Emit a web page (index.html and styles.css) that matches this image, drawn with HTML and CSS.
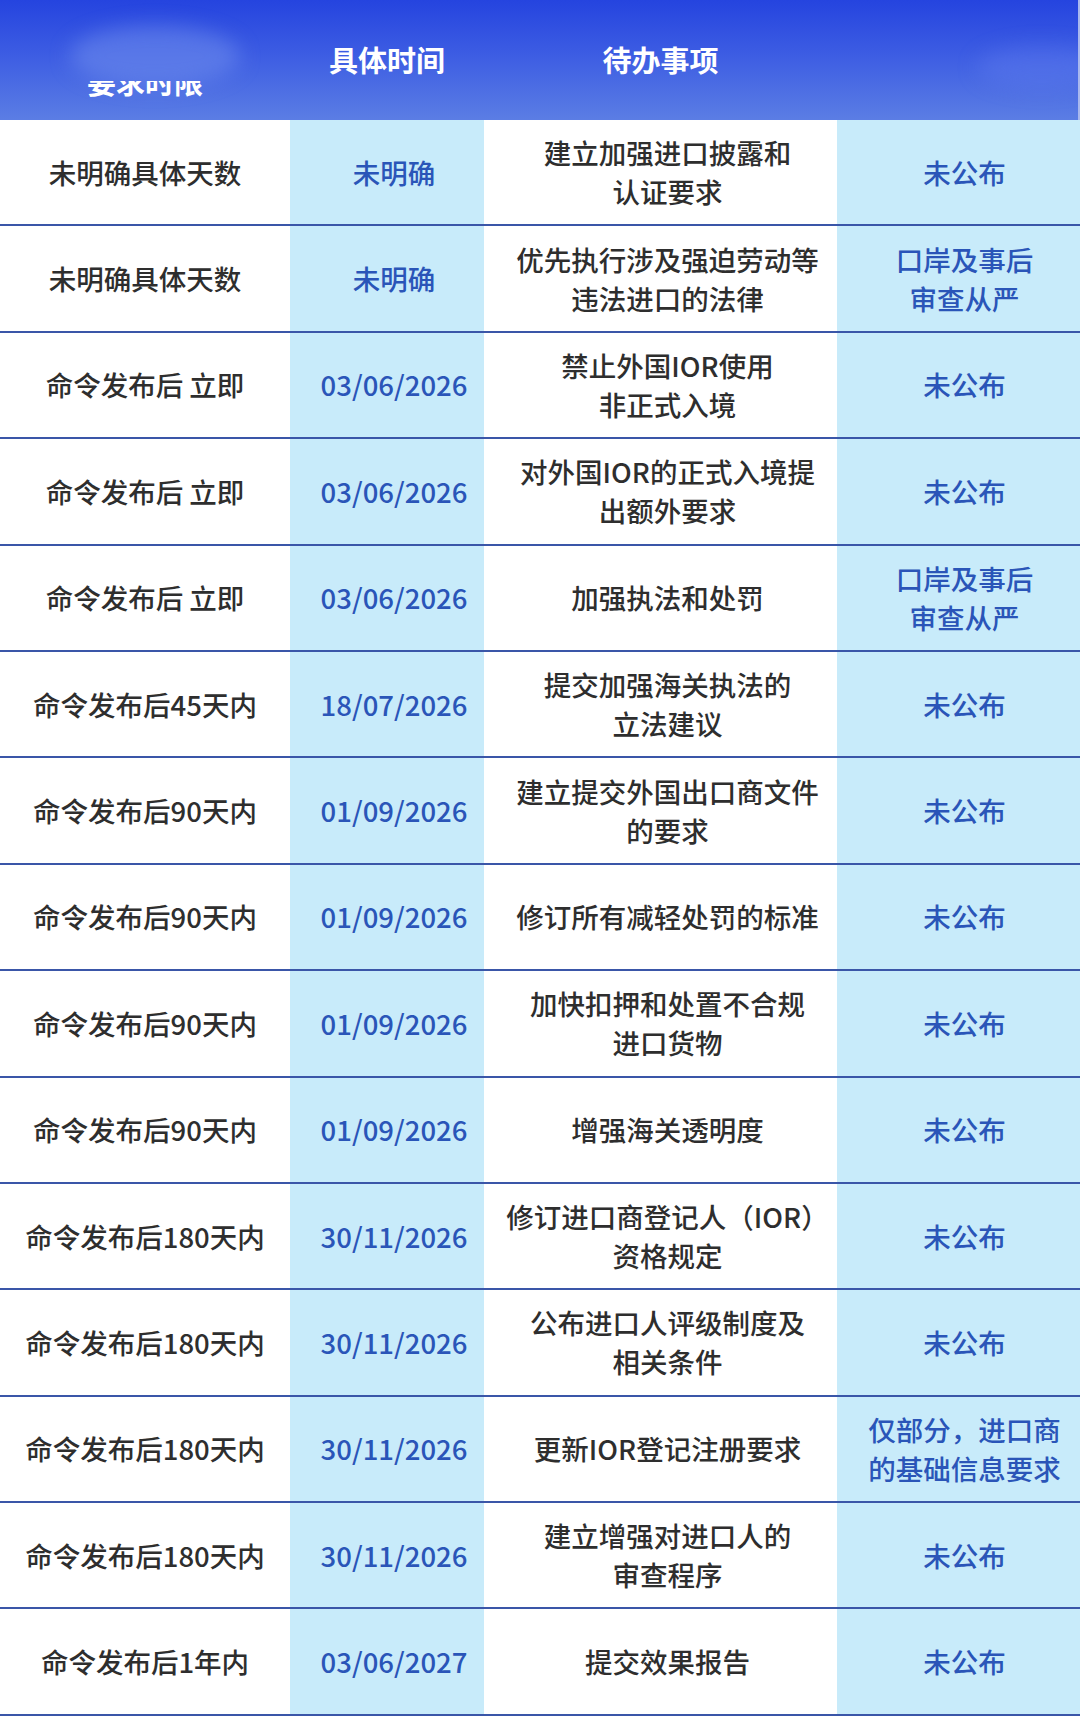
FILE: index.html
```html
<!DOCTYPE html>
<html lang="zh-CN">
<head>
<meta charset="utf-8">
<title>待办事项时间表</title>
<link rel="stylesheet" href="styles.css">
</head>
<body>
<div class="table">
  <div class="head">
    <div class="hcell hcell-first"><span class="blob blob-left"></span><span class="cut">要求时限</span></div>
    <div class="hcell">具体时间</div>
    <div class="hcell">待办事项</div>
    <div class="hcell"><span class="blob blob-right"></span></div>
  </div>

  <div class="row"><div class="c1">未明确具体天数</div><div class="c2">未明确</div><div class="c3">建立加强进口披露和<br>认证要求</div><div class="c4">未公布</div></div>
  <div class="row"><div class="c1">未明确具体天数</div><div class="c2">未明确</div><div class="c3">优先执行涉及强迫劳动等<br>违法进口的法律</div><div class="c4">口岸及事后<br>审查从严</div></div>
  <div class="row"><div class="c1">命令发布后 立即</div><div class="c2">03/06/2026</div><div class="c3">禁止外国IOR使用<br>非正式入境</div><div class="c4">未公布</div></div>
  <div class="row"><div class="c1">命令发布后 立即</div><div class="c2">03/06/2026</div><div class="c3">对外国IOR的正式入境提<br>出额外要求</div><div class="c4">未公布</div></div>
  <div class="row"><div class="c1">命令发布后 立即</div><div class="c2">03/06/2026</div><div class="c3">加强执法和处罚</div><div class="c4">口岸及事后<br>审查从严</div></div>
  <div class="row"><div class="c1">命令发布后45天内</div><div class="c2">18/07/2026</div><div class="c3">提交加强海关执法的<br>立法建议</div><div class="c4">未公布</div></div>
  <div class="row"><div class="c1">命令发布后90天内</div><div class="c2">01/09/2026</div><div class="c3">建立提交外国出口商文件<br>的要求</div><div class="c4">未公布</div></div>
  <div class="row"><div class="c1">命令发布后90天内</div><div class="c2">01/09/2026</div><div class="c3">修订所有减轻处罚的标准</div><div class="c4">未公布</div></div>
  <div class="row"><div class="c1">命令发布后90天内</div><div class="c2">01/09/2026</div><div class="c3">加快扣押和处置不合规<br>进口货物</div><div class="c4">未公布</div></div>
  <div class="row"><div class="c1">命令发布后90天内</div><div class="c2">01/09/2026</div><div class="c3">增强海关透明度</div><div class="c4">未公布</div></div>
  <div class="row"><div class="c1">命令发布后180天内</div><div class="c2">30/11/2026</div><div class="c3">修订进口商登记人（IOR）<br>资格规定</div><div class="c4">未公布</div></div>
  <div class="row"><div class="c1">命令发布后180天内</div><div class="c2">30/11/2026</div><div class="c3">公布进口人评级制度及<br>相关条件</div><div class="c4">未公布</div></div>
  <div class="row"><div class="c1">命令发布后180天内</div><div class="c2">30/11/2026</div><div class="c3">更新IOR登记注册要求</div><div class="c4">仅部分，进口商<br>的基础信息要求</div></div>
  <div class="row"><div class="c1">命令发布后180天内</div><div class="c2">30/11/2026</div><div class="c3">建立增强对进口人的<br>审查程序</div><div class="c4">未公布</div></div>
  <div class="row"><div class="c1">命令发布后1年内</div><div class="c2">03/06/2027</div><div class="c3">提交效果报告</div><div class="c4">未公布</div></div>
</div>
</body>
</html>
```

FILE: styles.css
```css
html, body {
  margin: 0;
  padding: 0;
  background: #ffffff;
}

body {
  font-family: "Noto Sans CJK SC", "Noto Sans", sans-serif;
  width: 1080px;
}

.table {
  display: flex;
  flex-direction: column;
  width: 1080px;
}

.head {
  display: grid;
  grid-template-columns: 290px 194px 353px 243px;
  height: 120px;
  background: linear-gradient(180deg, #2544df 0%, #3f5fe3 50%, #5b7de4 100%);
  border-right: 2px solid #a9b8ee;
  box-sizing: border-box;
  position: relative;
  overflow: hidden;
}

.hcell {
  position: relative;
  display: flex;
  align-items: center;
  justify-content: center;
  padding-bottom: 2px;
  color: #ffffff;
  font-size: 29px;
  font-weight: 700;
  letter-spacing: 0;
}

.hcell-first {
  align-items: flex-start;
  padding-top: 60px;
  padding-bottom: 0;
}

.cut {
  position: relative;
  clip-path: inset(50% 0 0 0);
  z-index: 1;
}

.blob {
  position: absolute;
  border-radius: 50%;
  filter: blur(10px);
}

.blob-left {
  left: 70px;
  top: 26px;
  width: 170px;
  height: 60px;
  background: rgba(115, 145, 238, 0.5);
}

.blob-right {
  left: 140px;
  top: 46px;
  width: 130px;
  height: 42px;
  background: rgba(100, 130, 240, 0.35);
}

.row {
  display: grid;
  grid-template-columns: 290px 194px 353px 243px;
  height: 106.4px;
  box-sizing: border-box;
  border-bottom: 2px solid #3a56a8;
  font-size: 27.5px;
  font-weight: 500;
  line-height: 39px;
}

.row > div {
  display: flex;
  align-items: center;
  justify-content: center;
  text-align: center;
  white-space: nowrap;
}

.c1 {
  color: #2e2e2e;
  background: #ffffff;
}

.c2 {
  color: #2a55b8;
  background: #c8ebfa;
  padding-left: 14px;
}

.c3 {
  color: #2e2e2e;
  background: #ffffff;
  padding-left: 14px;
}

.c4 {
  color: #2a55b8;
  background: #c8ebfa;
  padding-left: 12px;
}
```
